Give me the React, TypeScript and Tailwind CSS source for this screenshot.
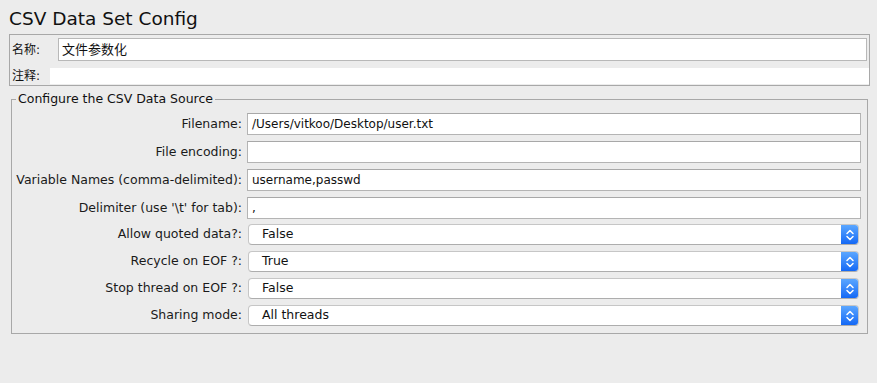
import React from "react";

const font = { fontFamily: '"DejaVu Sans", "Noto Sans CJK SC", sans-serif' };

function Chevrons() {
  return (
    <svg width="10" height="14" viewBox="0 0 10 14" fill="none">
      <path d="M2 5.5 L5 2.5 L8 5.5" stroke="white" strokeWidth="1.5" strokeLinecap="round" strokeLinejoin="round" />
      <path d="M2 8.5 L5 11.5 L8 8.5" stroke="white" strokeWidth="1.5" strokeLinecap="round" strokeLinejoin="round" />
    </svg>
  );
}

function InputRow({ label, value }: { label: string; value: string }) {
  return (
    <div className="flex items-center h-[22px]">
      <div className="w-[230px] text-right text-[12.5px] text-[#1a1a1a] whitespace-nowrap">{label}</div>
      <div className="ml-[5px] mr-[6px] flex-1 h-[22px] bg-white border border-[#b4b4b4] border-t-[#a8a8a8] flex items-center pl-[4px] text-[12px] text-[#111]">
        {value}
      </div>
    </div>
  );
}

function SelectRow({ label, value }: { label: string; value: string }) {
  return (
    <div className="flex items-center h-[21px]">
      <div className="w-[230px] text-right text-[12.5px] text-[#1a1a1a] whitespace-nowrap">{label}</div>
      <div className="ml-[6px] mr-[8px] flex-1 h-[21px] bg-white border border-[#c6c6c6] border-b-[#adadad] rounded-[4px] flex items-center overflow-hidden">
        <div className="flex-1 pl-[13px] text-[12.5px] text-[#111]">{value}</div>
        <div className="w-[17px] h-full bg-gradient-to-b from-[#5aa6ff] to-[#1368f5] flex items-center justify-center">
          <Chevrons />
        </div>
      </div>
    </div>
  );
}

export default function App() {
  return (
    <div className="w-[877px] h-[383px] bg-[#ececec] overflow-hidden" style={font}>
      <div className="h-[34px] flex items-center pl-[9px] pt-[4px] text-[18.5px] text-[#111]">CSV Data Set Config</div>

      <div className="ml-[9px] mr-[7px] border border-[#a8a8a8] h-[52px]">
        <div className="flex items-center mt-[3px] h-[23px]">
          <div className="w-[48px] pl-[2px] text-[12px] text-[#111]">名称:</div>
          <div className="flex-1 mr-[2px] h-[23px] bg-white border border-[#b8b8b8] flex items-center pl-[3px] text-[13px] text-[#111]">
            文件参数化
          </div>
        </div>
        <div className="flex items-center mt-[7px] h-[16px]">
          <div className="w-[40px] pl-[2px] text-[12px] text-[#111]">注释:</div>
          <div className="flex-1 h-full bg-white" />
        </div>
      </div>

      <fieldset className="mt-[5px] ml-[11px] mr-[9px] border border-[#a8a8a8] pb-[7px]">
        <legend className="ml-[4px] px-[2px] text-[12.5px] leading-[16px] text-[#111]">Configure the CSV Data Source</legend>
        <div className="flex flex-col gap-[6px] mt-[6px]">
          <InputRow label="Filename:" value="/Users/vitkoo/Desktop/user.txt" />
          <InputRow label="File encoding:" value="" />
          <InputRow label="Variable Names (comma-delimited):" value="username,passwd" />
          <InputRow label="Delimiter (use '\t' for tab):" value="," />
        </div>
        <div className="flex flex-col gap-[6px] mt-[5px]">
          <SelectRow label="Allow quoted data?:" value="False" />
          <SelectRow label="Recycle on EOF ?:" value="True" />
          <SelectRow label="Stop thread on EOF ?:" value="False" />
          <SelectRow label="Sharing mode:" value="All threads" />
        </div>
      </fieldset>
    </div>
  );
}
